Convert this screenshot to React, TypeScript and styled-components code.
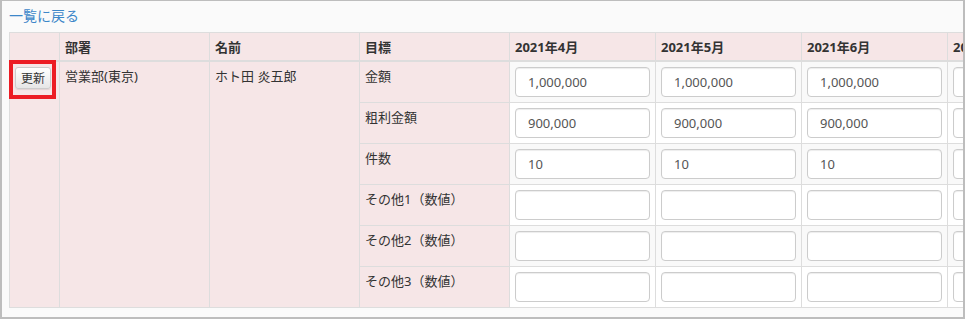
import React from "react";
import styled, { createGlobalStyle } from "styled-components";

const GlobalStyle = createGlobalStyle`
  html, body { margin: 0; padding: 0; background: #ffffff; }
  body {
    font-family: "Noto Sans", "Noto Sans CJK JP", sans-serif;
    font-size: 13px;
    color: #333333;
  }
`;

const Frame = styled.div`
  box-sizing: border-box;
  width: 965px;
  height: 319px;
  border: solid #bdbdbd;
  border-width: 1px 2px 2px 2px;
  background: #fafafa;
  overflow: hidden;
  padding: 4px 0 0 7px;
`;

const BackLink = styled.a`
  display: block;
  width: max-content;
  font-family: "Noto Sans CJK JP", sans-serif;
  font-size: 14px;
  line-height: 20px;
  color: #3d87c9;
  text-decoration: none;
  margin-bottom: 7px;
`;

const Table = styled.table`
  border-collapse: collapse;
  table-layout: fixed;
  width: ${(p: { $width: number }) => p.$width}px;
  border: 1px solid #dddddd;
`;

const HeadCell = styled.th`
  background: #f6e6e7;
  border: 1px solid #dddddd;
  border-bottom-width: 2px;
  padding: 5px 5px 4px;
  line-height: 18px;
  text-align: left;
  vertical-align: bottom;
  font-weight: bold;
  font-size: 13px;
  color: #333333;
  white-space: nowrap;
  overflow: hidden;
`;

type Tone = "pink" | "stripe" | "plain";
const toneColor: Record<Tone, string> = {
  pink: "#f6e6e7",
  stripe: "#f9f9f9",
  plain: "#ffffff",
};

const Cell = styled.td<{ $tone: Tone }>`
  background: ${(p) => toneColor[p.$tone]};
  border: 1px solid #dddddd;
  padding: 5px;
  line-height: 18px;
  vertical-align: top;
  font-size: 13px;
  color: #333333;
  white-space: nowrap;
`;

const ButtonWrap = styled.span`
  position: relative;
  display: inline-block;
`;

const UpdateButton = styled.button`
  display: block;
  box-sizing: border-box;
  height: 22px;
  padding: 1px 5px;
  font-family: "Noto Sans CJK JP", sans-serif;
  font-size: 12px;
  line-height: 18px;
  color: #333333;
  background: linear-gradient(#ffffff, #e6e6e6);
  border: 1px solid #cccccc;
  border-radius: 3px;
  box-shadow: 0 1px 1px rgba(0, 0, 0, 0.08);
  cursor: pointer;
`;

const Highlight = styled.span`
  position: absolute;
  left: -6px;
  top: -7px;
  right: -5px;
  bottom: -10px;
  border: 4px solid #ec1c24;
  pointer-events: none;
`;

const ValueInput = styled.input`
  display: block;
  box-sizing: border-box;
  width: 100%;
  height: 30px;
  padding: 6px 12px;
  font-family: "Noto Sans", sans-serif;
  font-size: 13px;
  color: #555555;
  background: #ffffff;
  border: 1px solid #cccccc;
  border-radius: 4px;
  box-shadow: inset 0 1px 1px rgba(0, 0, 0, 0.075);
  outline: none;
`;

const months = [
  "2021年4月",
  "2021年5月",
  "2021年6月",
  "2021年7月",
  "2021年8月",
  "2021年9月",
  "2021年10月",
  "2021年11月",
  "2021年12月",
  "2022年1月",
  "2022年2月",
  "2022年3月",
];

const targets: { label: string; value: string }[] = [
  { label: "金額", value: "1,000,000" },
  { label: "粗利金額", value: "900,000" },
  { label: "件数", value: "10" },
  { label: "その他1（数値）", value: "" },
  { label: "その他2（数値）", value: "" },
  { label: "その他3（数値）", value: "" },
];

const colWidths = [50, 150, 150, 150, ...months.map(() => 146)];
const tableWidth = colWidths.reduce((a, b) => a + b, 0);

export default function App() {
  return (
    <>
      <GlobalStyle />
      <Frame>
        <BackLink href="#">一覧に戻る</BackLink>
        <Table $width={tableWidth}>
          <colgroup>
            {colWidths.map((w, i) => (
              <col key={i} style={{ width: w }} />
            ))}
          </colgroup>
          <thead>
            <tr>
              <HeadCell />
              <HeadCell>部署</HeadCell>
              <HeadCell>名前</HeadCell>
              <HeadCell>目標</HeadCell>
              {months.map((m) => (
                <HeadCell key={m}>{m}</HeadCell>
              ))}
            </tr>
          </thead>
          <tbody>
            {targets.map((t, r) => (
              <tr key={t.label}>
                {r === 0 && (
                  <>
                    <Cell $tone="pink" rowSpan={targets.length}>
                      <ButtonWrap>
                        <UpdateButton type="button">更新</UpdateButton>
                        <Highlight />
                      </ButtonWrap>
                    </Cell>
                    <Cell $tone="pink" rowSpan={targets.length}>
                      営業部(東京)
                    </Cell>
                    <Cell $tone="pink" rowSpan={targets.length}>
                      ホト田 炎五郎
                    </Cell>
                  </>
                )}
                <Cell $tone="pink">{t.label}</Cell>
                {months.map((m) => (
                  <Cell key={m} $tone={r % 2 === 0 ? "stripe" : "plain"}>
                    <ValueInput defaultValue={t.value} />
                  </Cell>
                ))}
              </tr>
            ))}
          </tbody>
        </Table>
      </Frame>
    </>
  );
}
